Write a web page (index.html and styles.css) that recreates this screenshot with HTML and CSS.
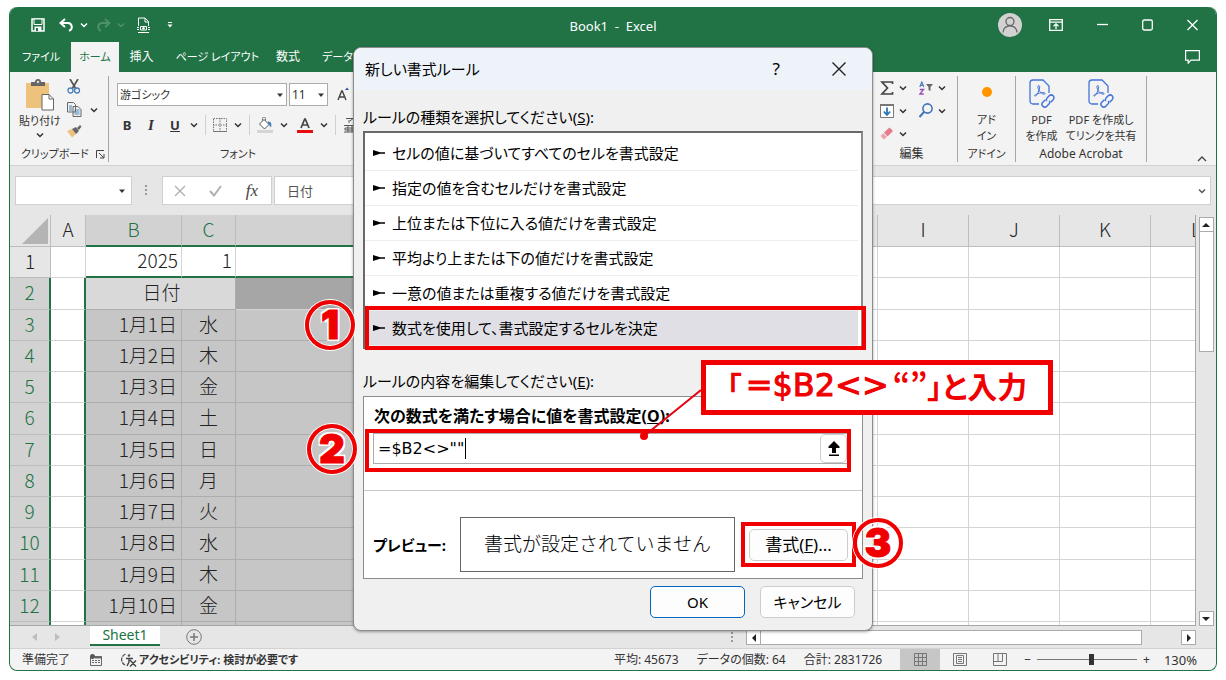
FILE: index.html
```html
<!DOCTYPE html>
<html lang="ja">
<head>
<meta charset="utf-8">
<title>Book1 - Excel</title>
<link rel="stylesheet" href="styles.css">
</head>
<body>
<svg class="defs" aria-hidden="true">
  <symbol id="chev" viewBox="0 0 8 8"><path d="M1 2.5 4 5.5 7 2.5" fill="none" stroke="currentColor" stroke-width="1.5"/></symbol>
  <symbol id="tri" viewBox="0 0 8 8"><path d="M1 2.5h6L4 6z" fill="currentColor"/></symbol>
  <symbol id="bullet" viewBox="0 0 12 8"><path d="M0 1 7 3.2H12V4.8H7L0 7z" fill="#000"/></symbol>
  <symbol id="pdf" viewBox="0 0 26 30"><g fill="none" stroke="#4474d8" stroke-width="1.3"><path d="M10 25H4a3 3 0 0 1-3-3V4a3 3 0 0 1 3-3h10l6 6v7"/><path d="M9.800 6.500c-1.300 0-1.200 2 0 4.300 1.300 2.600 3.600 4.400 5.400 4.400 1.300 0 1.200-1.300-.2-1.500-3-.3-6.500.8-8.500 2-1.500 1-.8 2 .3 1.200C8.500 15.500 10.500 11 10.700 8c0-1-.3-1.500-.9-1.500z" stroke-width="1"/><g transform="rotate(-45 19 22)" stroke-width="1.500"><path d="M18 19.200h-3.500a2.800 2.800 0 0 0 0 5.600h3a2.800 2.800 0 0 0 2.600-2"/><path d="M20 24.800h3.500a2.800 2.800 0 0 0 0-5.600h-3a2.800 2.800 0 0 0-2.600 2"/></g></g></symbol>
</svg>

<div class="window">
  <header class="titlebar">
    <div class="quick">
      <button class="ib q-save" aria-label="上書き保存"><svg width="14" height="14" viewBox="0 0 14 14"><path d="M1 1h12v12H1z" fill="none" stroke="#fff" stroke-width="1.500"/><path d="M3 1h8v5.500H3z" fill="#217346" stroke="#fff"/><path d="M3.500 8.500h7V13h-7z" fill="#fff"/><path d="M5 10h2v3H5z" fill="#217346"/></svg></button>
      <button class="ib q-undo" aria-label="元に戻す"><svg width="15" height="14" viewBox="0 0 15 14"><path d="M6 1 1.500 5 6 9M2 5h7a4 4 0 0 1 1 7.800" fill="none" stroke="#fff" stroke-width="2"/></svg><svg width="8" height="8" class="white"><use href="#chev"/></svg></button>
      <button class="ib q-redo" aria-label="やり直し"><svg width="15" height="14" viewBox="0 0 15 14"><path d="M9 1l4.500 4L9 9M13 5H6a4 4 0 0 0-1 7.800" fill="none" stroke="#4e9069" stroke-width="2"/></svg><svg width="8" height="8"><use href="#chev"/></svg></button>
      <button class="ib q-print" aria-label="印刷プレビュー"><svg width="13" height="16" viewBox="0 0 13 16"><path d="M1.500 9V1H8l3.500 3.500V9M8 1v4h3.500" fill="none" stroke="#fff"/><path d="M0 10h2v1H0zm11 0h2v1h-2zM0 12h2v1H0zm11 0h2v1h-2zM1 15h11v1H1z" fill="#fff"/><path d="M3.500 9.500h6V13h-6z" fill="none" stroke="#fff"/><circle cx="6.500" cy="11.200" r="1.200" fill="#fff"/></svg></button>
      <button class="ib q-more" aria-label="クイック アクセスのカスタマイズ"><svg width="6" height="6" viewBox="0 0 6 6"><path d="M1 .5h4" stroke="#fff"/><path d="M.5 2.500h5L3 5.500z" fill="#fff"/></svg></button>
    </div>
    <div class="doc-title">Book1&nbsp; -&nbsp; Excel</div>
    <div class="win-btns">
      <button class="avatar" aria-label="アカウント"><svg width="24" height="24" viewBox="0 0 24 24"><circle cx="12" cy="12" r="12" fill="#d2d2d2"/><circle cx="12" cy="8.500" r="4" fill="none" stroke="#666" stroke-width="1.300"/><path d="M5 19.500c0-9 14-9 14 0" fill="none" stroke="#666" stroke-width="1.300"/></svg></button>
      <button class="ib" aria-label="リボンの表示オプション"><svg width="14" height="12" viewBox="0 0 14 12"><path d="M.7.7h12.600v10.600H.7zM.7 3.200h12.600" fill="none" stroke="#fff" stroke-width="1.300"/><path d="M7 10V5M4.500 7.200 7 4.800l2.500 2.400" fill="none" stroke="#fff" stroke-width="1.300"/></svg></button>
      <button class="ib" aria-label="最小化"><svg width="11" height="12" viewBox="0 0 11 12"><path d="M0 5.500h11" stroke="#fff" stroke-width="1.300"/></svg></button>
      <button class="ib" aria-label="最大化"><svg width="11" height="12" viewBox="0 0 11 12"><rect x=".7" y="1" width="9.600" height="10" rx="1.500" fill="none" stroke="#fff" stroke-width="1.300"/></svg></button>
      <button class="ib" aria-label="閉じる"><svg width="11" height="12" viewBox="0 0 11 12"><path d="m.5 1 10 10m0-10-10 10" stroke="#fff" stroke-width="1.300"/></svg></button>
    </div>
  </header>

  <nav class="tabs">
    <button class="tab kana">ファイル</button>
    <button class="tab on kana">ホーム</button>
    <button class="tab">挿入</button>
    <button class="tab page kana">ページ レイアウト</button>
    <button class="tab">数式</button>
    <button class="tab kana">データ</button>
    <button class="ib comment" aria-label="コメント"><svg width="15" height="14" viewBox="0 0 15 14"><path d="M.6.6h13.800v9.500H6l-2.800 3v-3H.6z" fill="none" stroke="#fff" stroke-width="1.200"/></svg></button>
  </nav>

  <section class="ribbon">
    <div class="group clip">
      <div class="g-body">
        <button class="big paste"><svg width="28" height="32" viewBox="0 0 28 32"><path d="M0 4h23v25H0z" fill="#ecc27c"/><path d="M5 3h4a3 3 0 0 1 6 0h4v4H5z" fill="#666"/><circle cx="12" cy="3" r="1.200" fill="#ddd"/><path d="M16 15.500h7l4.500 4.500v11H16z" fill="#fff" stroke="#666"/><path d="M23 15.500V20h4.500" fill="none" stroke="#666"/></svg><span>貼り付け</span><svg width="8" height="8"><use href="#chev"/></svg></button>
        <div class="col">
          <button class="ib" aria-label="切り取り"><svg width="14" height="15" viewBox="0 0 14 15"><path d="m3 0 6 10M11 0 5 10" stroke="#555" stroke-width="1.700"/><circle cx="3.500" cy="11.500" r="2.500" fill="none" stroke="#4a7ebb" stroke-width="1.300"/><circle cx="10" cy="11.500" r="2.500" fill="none" stroke="#4a7ebb" stroke-width="1.300"/></svg></button>
          <button class="ib" aria-label="コピー"><svg width="15" height="15" viewBox="0 0 15 15"><path d="M.5.5h6l2 2V10h-8zM6 4.500h5l3 3v7H6z" fill="#f2f2f2" stroke="#666"/><path d="M2 4h3M2 6h3M2 8h3" stroke="#4a7ebb"/><path d="M7.500 8h5M7.500 10h5M7.500 12h5" stroke="#4a7ebb"/></svg><svg width="8" height="8"><use href="#chev"/></svg></button>
          <button class="ib" aria-label="書式のコピー"><svg width="15" height="13" viewBox="0 0 15 13"><path d="M0 6 5 4l4 5-4 3.500z" fill="#ecc27c"/><path d="m5 4 4-2 3 4-3 3zM10 3l3-3 1.500 1.500L12 5z" fill="#666"/></svg></button>
        </div>
      </div>
      <div class="g-name kana">クリップボード<svg width="9" height="9" viewBox="0 0 9 9"><path d="M.5 8V.5H8M3 3l5 5M8 4v4H4" fill="none" stroke="#444"/></svg></div>
    </div>
    <div class="group font">
      <div class="g-body fbody">
        <div class="frow">
          <label class="combo wide kana"><input type="text" value="游ゴシック" aria-label="フォント名"><svg width="8" height="8"><use href="#tri"/></svg></label>
          <label class="combo narrow"><input type="text" value="11" aria-label="フォント サイズ"><svg width="8" height="8"><use href="#tri"/></svg></label>
          <button class="ib grow" aria-label="フォント サイズの拡大"><svg width="13" height="16" viewBox="0 0 13 16"><path d="m1 13 3.700-9h.6L9 13M2.300 10h5.400" fill="none" stroke="#444" stroke-width="1.400"/><path d="M8 3l2-2.500L12 3z" fill="#2b579a"/></svg></button>
        </div>
        <div class="frow styles">
          <button class="tb"><b>B</b></button>
          <button class="tb it"><i>I</i></button>
          <button class="tb un"><u>U</u></button>
          <svg width="8" height="8"><use href="#chev"/></svg>
          <span class="vs"></span>
          <button class="ib" aria-label="罫線"><svg width="14" height="14" viewBox="0 0 14 14"><path d="M.5.5h13v13H.5zM7 0v14M0 7h14" fill="none" stroke="#777" stroke-dasharray="1.500 1"/><path d="M0 13.500h14" stroke="#777"/></svg></button>
          <svg width="8" height="8"><use href="#chev"/></svg>
          <span class="vs"></span>
          <button class="ib" aria-label="塗りつぶしの色"><svg width="16" height="16" viewBox="0 0 16 16"><path d="m2.500 7 4.500-4.500L12 7.500 7.500 12z" fill="#fff" stroke="#555"/><path d="M5.500 4V1.500a1.500 1.500 0 0 1 3 0V4" fill="none" stroke="#777"/><path d="M11 4.500c3 0 4 2 3 6-1-1-2-3-3-3.500z" fill="#4a7ebb"/><path d="M0 13h16v3H0z" fill="#d4d4d4"/></svg></button>
          <svg width="8" height="8"><use href="#chev"/></svg>
          <button class="ib fc" aria-label="フォントの色"><svg width="16" height="16" viewBox="0 0 16 16"><path d="m4 11 3.700-9h.6L12 11M5.200 8h5.600" fill="none" stroke="#444" stroke-width="1.700"/><path d="M0 13h16v3H0z" fill="#e80d0d"/></svg></button>
          <svg width="8" height="8"><use href="#chev"/></svg>
          <span class="vs"></span>
          <button class="ib" aria-label="ふりがな"><svg width="14" height="16" viewBox="0 0 14 16"><path d="M3 1.500h7L7 4M6 3v3M1 8.500h12M1 15h12M2 11h10v2H2zM5 8.500V15M9 8.500V15" fill="none" stroke="#555"/></svg></button>
        </div>
      </div>
      <div class="g-name kana">フォント</div>
    </div>
    <div class="group edit">
      <div class="g-body egrid">
        <button class="ib"  aria-label="合計"><svg width="14" height="14" viewBox="0 0 14 14"><path d="M12.500 3V1H2L7.500 7 2 13h10.500v-2" fill="none" stroke="#444" stroke-width="1.700"/></svg><svg width="8" height="8"><use href="#chev"/></svg></button>
        <button class="ib" aria-label="並べ替えとフィルター"><svg width="14" height="14" viewBox="0 0 14 14"><path d="m.8 6 2-5 2 5M1.500 4.300h2.600" fill="none" stroke="#4a7ebb" stroke-width="1.200"/><path d="M.8 8.500h3.800L.8 13h4" fill="none" stroke="#9b4fb5" stroke-width="1.300"/><path d="M7 3h7l-2.500 3v4l-2-1V6z" fill="#666"/></svg><svg width="8" height="8"><use href="#chev"/></svg></button>
        <button class="ib" aria-label="フィル"><svg width="14" height="14" viewBox="0 0 14 14"><path d="M.5.5h13v13H.5z" fill="#fff" stroke="#777"/><path d="M0 0h14v2H0z" fill="#777"/><path d="M7 3.500V11M3.800 7.500 7 11l3.200-3.500" fill="none" stroke="#2e75b6" stroke-width="1.800"/></svg><svg width="8" height="8"><use href="#chev"/></svg></button>
        <button class="ib" aria-label="検索と選択"><svg width="14" height="15" viewBox="0 0 14 15"><circle cx="8.500" cy="5.500" r="4.600" fill="none" stroke="#3f76b5" stroke-width="1.600"/><path d="m5 9-4.500 5" stroke="#3f76b5" stroke-width="2"/></svg><svg width="8" height="8"><use href="#chev"/></svg></button>
        <button class="ib" aria-label="クリア"><svg width="14" height="13" viewBox="0 0 14 13"><path d="m4 5.500 5.500-5L13 4 7.500 9.500z" fill="#e57b8c"/><path d="M3.300 6.200 6.800 10 4 12.500.5 9z" fill="#efa0ac"/></svg><svg width="8" height="8"><use href="#chev"/></svg></button>
      </div>
      <div class="g-name">編集</div>
    </div>
    <div class="group addin">
      <div class="g-body"><button class="big"><svg width="26" height="30" viewBox="0 0 26 30"><circle cx="13" cy="13" r="5" fill="#ff9500"/></svg><span>アド<br>イン</span></button></div>
      <div class="g-name kana">アドイン</div>
    </div>
    <div class="group acro">
      <div class="g-body">
        <button class="big"><svg width="26" height="30"><use href="#pdf"/></svg><span>PDF<br>を作成</span></button>
        <button class="big"><svg width="26" height="30"><use href="#pdf"/></svg><span>PDF を作成し<br>てリンクを共有</span></button>
      </div>
      <div class="g-name">Adobe Acrobat</div>
    </div>
    <div class="r-end"><button class="ib" aria-label="リボンを折りたたむ"><svg width="10" height="8" viewBox="0 0 10 8"><path d="m1 6 4-4 4 4" fill="none" stroke="#444" stroke-width="1.300"/></svg></button></div>
  </section>

  <section class="fbar">
    <label class="namebox"><input type="text" aria-label="名前ボックス"><svg width="8" height="8"><use href="#tri"/></svg></label>
    <span class="dots"></span>
    <div class="fx">
      <svg width="12" height="12" viewBox="0 0 12 12"><path d="m1 1 10 10m0-10L1 11" stroke="#b0b0b0" stroke-width="1.400"/></svg>
      <svg width="13" height="12" viewBox="0 0 13 12"><path d="m1 6 4 4.500L12 1" fill="none" stroke="#b0b0b0" stroke-width="2"/></svg>
      <i>fx</i>
    </div>
    <label class="formula"><input type="text" value="日付" aria-label="数式バー"><svg width="8" height="8"><use href="#chev"/></svg></label>
  </section>

  <section class="sheet">
    <div class="grid">
      <table>
        <colgroup><col class="w-r"><col class="w-a"><col class="w-b"><col class="w-c"><col class="w-d"><col><col><col><col><col><col><col><col></colgroup>
        <thead><tr><th class="corner"><svg width="26" height="26" viewBox="0 0 26 26"><path d="M26 0v26H0z" fill="#b4b4b4"/></svg></th><th>A</th><th class="s">B</th><th class="s">C</th><th class="s"></th><th></th><th></th><th></th><th></th><th>I</th><th>J</th><th>K</th><th>L</th></tr></thead>
        <tbody>
          <tr class="r1"><th>1</th><td></td><td class="r">2025</td><td class="r">1</td><td></td><td></td><td></td><td></td><td></td><td></td><td></td><td></td><td></td></tr>
          <tr class="sel"><th>2</th><td></td><td class="head" colspan="2">日付</td><td class="dark"></td><td></td><td></td><td></td><td></td><td></td><td></td><td></td><td></td></tr>
          <tr class="sel day"><th>3</th><td></td><td>1月1日</td><td>水</td><td></td><td></td><td></td><td></td><td></td><td></td><td></td><td></td><td></td></tr>
          <tr class="sel day"><th>4</th><td></td><td>1月2日</td><td>木</td><td></td><td></td><td></td><td></td><td></td><td></td><td></td><td></td><td></td></tr>
          <tr class="sel day"><th>5</th><td></td><td>1月3日</td><td>金</td><td></td><td></td><td></td><td></td><td></td><td></td><td></td><td></td><td></td></tr>
          <tr class="sel day"><th>6</th><td></td><td>1月4日</td><td>土</td><td></td><td></td><td></td><td></td><td></td><td></td><td></td><td></td><td></td></tr>
          <tr class="sel day"><th>7</th><td></td><td>1月5日</td><td>日</td><td></td><td></td><td></td><td></td><td></td><td></td><td></td><td></td><td></td></tr>
          <tr class="sel day"><th>8</th><td></td><td>1月6日</td><td>月</td><td></td><td></td><td></td><td></td><td></td><td></td><td></td><td></td><td></td></tr>
          <tr class="sel day"><th>9</th><td></td><td>1月7日</td><td>火</td><td></td><td></td><td></td><td></td><td></td><td></td><td></td><td></td><td></td></tr>
          <tr class="sel day"><th>10</th><td></td><td>1月8日</td><td>水</td><td></td><td></td><td></td><td></td><td></td><td></td><td></td><td></td><td></td></tr>
          <tr class="sel day"><th>11</th><td></td><td>1月9日</td><td>木</td><td></td><td></td><td></td><td></td><td></td><td></td><td></td><td></td><td></td></tr>
          <tr class="sel day"><th>12</th><td></td><td>1月10日</td><td>金</td><td></td><td></td><td></td><td></td><td></td><td></td><td></td><td></td><td></td></tr>
          <tr class="sel day"><th></th><td></td><td></td><td></td><td></td><td></td><td></td><td></td><td></td><td></td><td></td><td></td><td></td></tr>
        </tbody>
      </table>
    </div>
    <div class="vscroll">
      <button class="sb" aria-label="上へ"><svg width="8" height="6" viewBox="0 0 8 6"><path d="M0 5h8L4 1z" fill="#222"/></svg></button>
      <div class="vthumb"></div>
      <button class="sb end" aria-label="下へ"><svg width="8" height="6" viewBox="0 0 8 6"><path d="M0 1h8L4 5z" fill="#222"/></svg></button>
    </div>
  </section>

  <section class="sheetbar">
    <div class="nav"><svg width="6" height="8" viewBox="0 0 6 8"><path d="M5 0v8L0 4z" fill="#bdbdbd"/></svg><svg width="6" height="8" viewBox="0 0 6 8"><path d="M1 0v8l5-4z" fill="#bdbdbd"/></svg></div>
    <button class="stab">Sheet1</button>
    <button class="ib plus" aria-label="新しいシート"><svg width="16" height="16" viewBox="0 0 16 16"><circle cx="8" cy="8" r="7.300" fill="none" stroke="#777"/><path d="M8 4v8M4 8h8" stroke="#777" stroke-width="1.500"/></svg></button>
    <div class="hscroll">
      <span class="dots"></span>
      <button class="sb" aria-label="左へ"><svg width="6" height="8" viewBox="0 0 6 8"><path d="M5 0v8L1 4z" fill="#222"/></svg></button>
      <div class="hthumb"></div>
      <button class="sb end" aria-label="右へ"><svg width="6" height="8" viewBox="0 0 6 8"><path d="M1 0v8l4-4z" fill="#222"/></svg></button>
    </div>
  </section>

  <footer class="status">
    <span>準備完了</span>
    <svg class="macro" width="12" height="12" viewBox="0 0 12 12"><path d="M.5 2.500h11v9H.5z" fill="none" stroke="#666"/><path d="M5 2.500h7v2H5z" fill="#666"/><circle cx="2.500" cy="2.500" r="2.500" fill="#555"/><path d="M2 6.500h8M2 8.500h8" stroke="#666" stroke-dasharray="2 1"/></svg>
    <svg class="acc" width="16" height="14" viewBox="0 0 16 14"><path d="M4.500 1A6 6 0 0 0 4 12" fill="none" stroke="#555" stroke-width="1.300" stroke-dasharray="4 1"/><circle cx="8" cy="2.500" r="1.300" fill="#555"/><path d="M5 5.500h7M8 5v4l-2 4M9 7l6 6.500m0-6L9 13.500" fill="none" stroke="#444" stroke-width="1.400"/></svg>
    <b class="kana">アクセシビリティ: 検討が必要です</b>
    <div class="st-right">
      <span>平均: 45673</span><span>データの個数: 64</span><span>合計: 2831726</span>
    </div>
    <div class="views">
      <button class="vb on" aria-label="標準"><svg width="13" height="13" viewBox="0 0 13 13"><path d="M.5.500h12v12H.5zM4.500 0v13M8.500 0v13M0 4.500h13M0 8.500h13" fill="none" stroke="#777"/></svg></button>
      <button class="vb" aria-label="ページ レイアウト"><svg width="14" height="13" viewBox="0 0 14 13"><path d="M.5.500h13v12H.5zM3.500 2.500h7v8h-7zM5 4.500h4M5 6.500h4M5 8.500h4" fill="none" stroke="#777"/></svg></button>
      <button class="vb" aria-label="改ページ プレビュー"><svg width="14" height="13" viewBox="0 0 14 13"><path d="M.5.500h13v12H.5zM5 .5v8M.5 8.500h9v-8" fill="none" stroke="#777"/></svg></button>
    </div>
    <div class="zoom"><span>−</span><input type="range" min="10" max="190" value="109" aria-label="ズーム"><span>+</span><span class="pct">130%</span></div>
  </footer>

  <div class="dialog" role="dialog" aria-label="新しい書式ルール">
    <div class="d-title"><span>新しい書式ルール</span><button class="ib help">?</button><button class="ib" aria-label="閉じる"><svg width="14" height="14" viewBox="0 0 14 14"><path d="m.5.500 13 13m0-13-13 13" stroke="#222" stroke-width="1.400"/></svg></button></div>
    <div class="d-body">
      <div class="d-label" id="kinds">ルールの種類を選択してください(<u>S</u>):</div>
      <ul class="rules" role="listbox" aria-labelledby="kinds">
        <li role="option"><svg width="12" height="8"><use href="#bullet"/></svg>セルの値に基づいてすべてのセルを書式設定</li>
        <li role="option"><svg width="12" height="8"><use href="#bullet"/></svg>指定の値を含むセルだけを書式設定</li>
        <li role="option"><svg width="12" height="8"><use href="#bullet"/></svg>上位または下位に入る値だけを書式設定</li>
        <li role="option"><svg width="12" height="8"><use href="#bullet"/></svg>平均より上または下の値だけを書式設定</li>
        <li role="option"><svg width="12" height="8"><use href="#bullet"/></svg>一意の値または重複する値だけを書式設定</li>
        <li role="option" aria-selected="true"><svg width="12" height="8"><use href="#bullet"/></svg>数式を使用して、書式設定するセルを決定</li>
      </ul>
      <div class="d-label second">ルールの内容を編集してください(<u>E</u>):</div>
      <div class="edit-box">
        <label class="f-label" for="f">次の数式を満たす場合に値を書式設定(<u>O</u>):</label>
        <div class="f-field"><input id="f" type="text" value='=$B2&lt;&gt;""'><span class="caret"></span><button aria-label="ダイアログの縮小"><svg width="12" height="16" viewBox="0 0 12 16"><path d="M6 0 .5 5.500V7H4v5h4V7h3.500V5.500z"/><path d="M1 13.500h10V15H1z"/></svg></button></div>
        <div class="preview">
          <b>プレビュー:</b>
          <div class="p-box">書式が設定されていません</div>
          <button class="btn fmt">書式(<u>F</u>)...</button>
        </div>
      </div>
      <div class="d-btns"><button class="btn ok">OK</button><button class="btn">キャンセル</button></div>
    </div>

    <div class="mark m1"></div><div class="mark m2"></div><div class="mark m3"></div>
    <svg class="leader" width="64" height="56" viewBox="0 0 64 56"><path d="M62 3 5 49" stroke="#e60012" stroke-width="2"/><circle cx="5" cy="49" r="4" fill="#f00000"/></svg>
    <div class="callout">「<span>=$B2&lt;&gt;</span>“”」と入力</div>
    <div class="num n1">1</div><div class="num n2">2</div><div class="num n3">3</div>
  </div>
</div>
</body>
</html>
```
FILE: styles.css
```css
* { box-sizing: border-box; }
body {
  margin: 0; padding: 7px 9px 9px; height: 100vh; display: flex; background: #fff;
  font: 12px/16px "Noto Sans", "Noto Sans CJK JP", sans-serif; color: #333;
  font-feature-settings: "palt";
}
button, input { font: inherit; color: inherit; font-feature-settings: inherit; border: 0; padding: 0; margin: 0; background: none; outline: 0; min-width: 0; }
svg { display: block; flex: none; }
.defs { position: absolute; width: 0; height: 0; }
.kana { font-size: 11px; }
.ib { display: flex; align-items: center; gap: 8px; }
.window { position: relative; flex: 1; display: flex; flex-direction: column; border: 1px solid #217346; border-top: 0; border-radius: 8px; background: #e6e6e6; min-width: 0; }

.titlebar { background: #217346; height: 35px; border-radius: 8px 8px 0 0; display: grid; grid-template-columns: 1fr auto 1fr; align-items: center; color: #fff; }
.doc-title { font-size: 13px; padding-top: 2px; }
.quick { display: flex; align-items: center; padding-left: 21px; gap: 14px; }
.q-undo, .q-redo { gap: 6px; color: #4e9069; }
.q-redo { margin-left: -6px; }
.q-print { margin-left: -2px; }
.q-more { margin-left: 3px; }
.white { color: #fff; }
.win-btns { display: flex; justify-content: flex-end; align-items: center; gap: 34px; padding-right: 18px; }
.avatar { margin-right: -7px; }

.tabs { background: #217346; height: 30px; display: flex; color: #fff; }
.tab { padding: 0 11px; }
.tab:first-child { padding: 0 11px 0 12px; }
.tab.on { background: #f3f3f3; color: #217346; padding: 0 8px; }
.tab.page { padding-right: 6px; }
.comment { margin: 0 16px 0 auto; }

.ribbon { background: #f3f3f3; height: 94px; display: flex; padding-top: 4px; border-bottom: 1px solid #d2d2d2; }
.group { display: flex; flex-direction: column; border-right: 1px solid #a6a6a6; margin-bottom: 3px; }
.g-body { flex: 1; min-height: 0; display: flex; }
.g-name { height: 16px; text-align: center; }
.big { display: flex; flex-direction: column; align-items: center; font-size: 11px; gap: 3px; padding-top: 3px; justify-content: flex-start; }
.clip { width: 99px; }
.clip .g-body { gap: 6px; padding-left: 9px; }
.clip .g-name { display: flex; align-items: center; justify-content: space-between; padding: 0 3px 0 11px; }
.paste { gap: 2px; }
.col { display: flex; flex-direction: column; gap: 8px; padding-top: 3px; }
.font { flex: 1; border-right: 0; padding-left: 8px; }
.font .g-name { width: 242px; }
.fbody { flex-direction: column; gap: 9px; padding-top: 7px; }
.frow { display: flex; align-items: center; }
.combo { height: 23px; border: 1px solid #ababab; background: #fff; display: flex; align-items: center; padding: 0 2px; }
.combo input { flex: 1; }
.wide { width: 170px; margin-right: 2px; }
.narrow { width: 39px; }
.grow { margin-left: 9px; }
.styles { gap: 7px; padding-left: 4px; }
.tb { width: 12px; font-size: 13px; margin-right: 5px; }
.it { font-family: "Liberation Serif", serif; font-weight: bold; font-size: 15px; }
.un { margin-right: 2px; font-weight: bold; }
.vs { width: 1px; height: 20px; background: #d0d0d0; }
.fc { margin-left: 2px; }
.edit { width: 83px; }
.egrid { display: grid; grid-template-columns: 39px 34px; align-content: start; grid-auto-rows: 23px; padding-left: 5px; }
.egrid .ib { gap: 5px; }
.edit .g-name { padding-right: 9px; }
.addin { width: 58px; }
.addin .g-body, .acro .g-body { justify-content: center; }
.acro { width: 131px; }
.acro .g-body { gap: 8px; }
.r-end { width: 69px; display: flex; align-items: flex-end; justify-content: flex-end; padding: 0 9px 2px 0; }

.fbar { height: 49px; display: flex; align-items: center; padding: 0 5px; }
.namebox, .fx, .formula { height: 29px; background: #fff; border: 1px solid #d0d0d0; display: flex; align-items: center; }
.namebox { width: 117px; padding-right: 5px; }
.namebox input, .formula input { flex: 1; }
.dots { width: 3px; height: 11px; background: radial-gradient(circle at 1px 1px, #999 1px, transparent 1px) 0 0 / 3px 4px; margin: 0 14px 0 13px; }
.fx { width: 110px; justify-content: space-between; padding: 0 13px 0 11px; margin-right: 2px; }
.fx i { font: italic 17px/20px "Liberation Serif", serif; color: #444; }
.formula { flex: 1; padding: 0 4px 0 12px; font-size: 13px; color: #555; }

.sheet { flex: 1; min-height: 0; display: flex; }
.grid { flex: 1; min-width: 0; overflow: hidden; background: #fff; border-bottom: 1px solid #a6a6a6; border-right: 1px solid #a6a6a6; }
table { border-collapse: separate; border-spacing: 0; table-layout: fixed; width: 1232px; font: 300 19px/25px "Noto Sans CJK JP", sans-serif; color: #222; }
col { width: 91px; }
.w-r { width: 41px; } .w-a { width: 35px; } .w-b { width: 96px; } .w-c { width: 54px; } .w-d { width: 278px; }
th, td { padding: 0 0 4px; height: 31px; font-weight: inherit; border-right: 1px solid #d4d4d4; border-bottom: 1px solid #d4d4d4; text-align: center; white-space: nowrap; }
tbody tr:nth-child(4n+2) th, tbody tr:nth-child(4n+2) td { height: 32px; }
thead th { height: 32px; background: #e6e6e6; border-color: #bdbdbd; }
th.s { background: #d2d2d2; color: #217346; border-bottom: 2px solid #217346; }
.corner { padding: 0; }
.corner svg { margin: 0 2px 0 auto; }
tbody th { background: #e6e6e6; border-color: #bdbdbd; }
.sel th { background: #d2d2d2; color: #217346; border-right: 2px solid #217346; }
.r { text-align: right; padding-right: 3px; }
.r1 td:nth-child(n+3):nth-child(-n+5) { border-bottom: 2px solid #217346; }
.sel td:nth-child(2) { border-right: 2px solid #217346; }
.day td:nth-child(n+3):nth-child(-n+5) { background: #c6c6c6; border-color: #adadad; }
.day td:nth-child(3) { text-align: right; padding-right: 4px; }
.head { background: #d9d9d9; border-color: #adadad; padding-left: 2px; }
.dark { background: #a6a6a6; }
.vscroll { width: 20px; display: flex; flex-direction: column; align-items: center; padding-top: 2px; }
.sb { width: 15px; height: 15px; background: #fff; border: 1px solid #ababab; display: flex; align-items: center; justify-content: center; flex: none; }
.vthumb { width: 15px; height: 120px; background: #fff; border: 1px solid #ababab; border-top: 0; }
.vscroll .end { margin-top: auto; }

.sheetbar { height: 23px; display: flex; align-items: flex-start; border-bottom: 1px solid #d2d2d2; }
.nav { display: flex; gap: 16px; padding: 7px 0 0 22px; width: 80px; }
.stab { width: 70px; height: 20px; background: #fff; color: #217346; font-size: 14px; line-height: 18px; border-bottom: 2px solid #217346; }
.plus { margin: 3px 0 0 26px; }
.hscroll { margin-left: auto; width: 465px; display: flex; align-items: center; padding: 4px 0 0; margin-right: 20px; }
.hscroll .dots { margin: 0 12px 0 0; }
.hthumb { width: 381px; height: 15px; background: #fff; border: 1px solid #ababab; border-left: 0; }
.hscroll .end { margin-left: auto; }

.status { height: 21px; background: #f3f3f3; border-radius: 0 0 8px 8px; display: flex; align-items: center; padding-left: 12px; padding-right: 19px; }
.macro { margin-left: 20px; }
.acc { margin: 0 2px 0 19px; }
.st-right { margin-left: auto; display: flex; gap: 18px; padding-right: 18px; }
.views { display: flex; align-self: stretch; }
.vb { width: 40px; display: flex; align-items: center; justify-content: center; }
.vb.on { background: #c6c6c6; }
.zoom { display: flex; align-items: center; gap: 6px; margin-left: 4px; }
.zoom input { appearance: none; width: 100px; height: 14px; background: linear-gradient(#777, #777) center / 100% 1px no-repeat; }
.zoom input::-webkit-slider-thumb { appearance: none; width: 5px; height: 11px; background: #333; }
.pct { margin-left: 8px; font-size: 13px; }

.dialog { position: absolute; left: 343px; top: 40px; width: 520px; height: 584px; background: #f0f0f0; border: 1px solid #8c8c8c; border-radius: 8px; box-shadow: 0 1px 3px rgba(0,0,0,.35); color: #000; font-size: 15px; line-height: 20px; }
.d-title { height: 42px; background: #eef3fa; border-radius: 8px 8px 0 0; display: flex; align-items: center; padding: 0 26px 0 11px; }
.help { margin: 0 52px 0 auto; font-size: 17px; }
.d-body { padding: 17px 9px 0; }
.rules { list-style: none; margin: 4px 0 0; padding: 3px 3px 1px 7px; border: 2px solid #696969; border-right-color: #8c8c8c; background: #fff; }
.rules li { height: 35px; display: flex; align-items: center; gap: 7px; border-bottom: 1px solid #ededed; margin-left: -7px; padding-left: 8px; }
.rules li[aria-selected] { background: #e1dfe6; }
.second { margin-top: 22px; }
.edit-box { margin-top: 5px; height: 183px; border: 1px solid #8c8c8c; background: #fff; }
.f-label { display: block; font-size: 16px; font-weight: bold; margin: 9px 0 7px 10px; }
.f-field { position: relative; display: flex; height: 31px; margin: 0 14px 0 9px; border: 1px solid #ababab; }
.f-field input { flex: 1; padding-left: 4px; font: 16px/20px "DejaVu Sans", sans-serif; }
.f-field button { width: 27px; border: 1px solid #ccc; border-radius: 5px; display: flex; align-items: center; justify-content: center; }
.caret { position: absolute; left: 91px; top: 4px; width: 1px; height: 21px; background: #000; }
.preview { margin-top: 26px; border-top: 1px solid #c8c8c8; padding: 26px 14px 0 9px; display: flex; align-items: center; }
.preview b { width: 87px; }
.p-box { width: 275px; height: 55px; border: 1px solid #666; display: flex; align-items: center; justify-content: center; padding-bottom: 3px; font: 300 19px/24px "Noto Sans CJK JP", sans-serif; }
.btn { height: 32px; width: 95px; border: 1px solid #ccc; border-radius: 5px; background: #fdfdfd; }
.fmt { width: 99px; margin-left: auto; font-size: 17px; }
.d-btns { display: flex; justify-content: flex-end; gap: 15px; padding: 7px 8px 0; }
.ok { border-color: #0067c0; }

.mark { position: absolute; border: 4px solid #f00000; pointer-events: none; }
.m1 { left: 11px; top: 258px; width: 501px; height: 44px; }
.m2 { left: 11px; top: 381px; width: 486px; height: 43px; }
.m3 { left: 387px; top: 474px; width: 115px; height: 45px; }
.leader { position: absolute; left: 285px; top: 339px; }
.callout { position: absolute; left: 347px; top: 312px; width: 352px; height: 55px; border: 5px solid #f00000; background: #fff; color: #f00000; font: bold 30px/40px "Noto Sans CJK JP", sans-serif; font-feature-settings: "palt"; display: flex; justify-content: center; gap: 4px; white-space: nowrap; }
.callout span { font-family: "DejaVu Sans", sans-serif; font-weight: normal; font-size: 32px; -webkit-text-stroke: 1px #f00000; }
.num { position: absolute; width: 50px; height: 50px; border: 4px solid #f00000; border-radius: 50%; box-shadow: 0 0 0 1px #fff, inset 0 0 0 1px #fff; color: #f00000; font: 900 40px/42px Inter, sans-serif; text-align: center; -webkit-text-stroke: 1px #f00000; text-shadow: 2px 2px #fff, -2px -2px #fff, 2px -2px #fff, -2px 2px #fff; }
.n1 { left: -49px; top: 252px; }
.n2 { left: -47px; top: 376px; }
.n3 { left: 499px; top: 470px; }
```
